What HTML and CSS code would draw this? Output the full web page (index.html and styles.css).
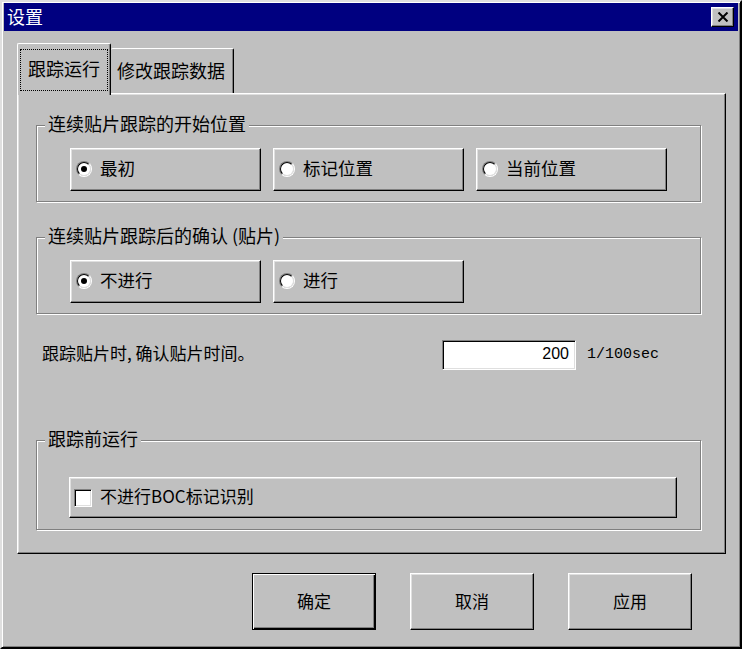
FILE: index.html
```html
<html>
  <head>
    <title>设置</title>
    <meta charset="UTF-8">
    <link rel="stylesheet" href="styles.css">
  </head>
  <body>
    <div class="window">
      <div class="titlebar">
        <span class="title">设置</span>
        <span class="close">
          <svg width="12" height="10" viewBox="0 0 12 10">
            <path d="M1.5 0.5 L10.5 9.5 M10.5 0.5 L1.5 9.5" stroke="#000" stroke-width="2" fill="none"/>
          </svg>
        </span>
      </div>
      <div class="content">
        <div class="tabs">
          <div class="tab tab-active"><span class="tab-label">跟踪运行</span></div>
          <div class="tab tab-other">修改跟踪数据</div>
        </div>
        <div class="panel">
          <div class="group">
            <span class="group-title">连续贴片跟踪的开始位置</span>
            <div class="choices">
              <div class="choice"><span class="radio on"><span class="radio-in"></span></span>最初</div>
              <div class="choice"><span class="radio"><span class="radio-in"></span></span>标记位置</div>
              <div class="choice"><span class="radio"><span class="radio-in"></span></span>当前位置</div>
            </div>
          </div>
          <div class="group g2">
            <span class="group-title">连续贴片跟踪后的确认 (贴片)</span>
            <div class="choices">
              <div class="choice"><span class="radio on"><span class="radio-in"></span></span>不进行</div>
              <div class="choice"><span class="radio"><span class="radio-in"></span></span>进行</div>
            </div>
          </div>
          <div class="time-row">
            <span class="time-text">跟踪贴片时, 确认贴片时间。</span>
            <div class="field">200</div>
            <span class="unit">1/100sec</span>
          </div>
          <div class="group g3">
            <span class="group-title">跟踪前运行</span>
            <div class="check-wrap">
              <div class="check-btn"><span class="check"></span>不进行BOC标记识别</div>
            </div>
          </div>
        </div>
        <div class="actions">
          <div class="btn btn-default">确定</div>
          <div class="btn">取消</div>
          <div class="btn">应用</div>
        </div>
      </div>
    </div>
  </body>
</html>
```
FILE: styles.css
```css
body {
  margin: 0;
  background: #c0c0c0;
  color: #000;
  font-family: "Noto Sans CJK SC", "Liberation Sans", sans-serif;
  font-size: 17px;
}
.window {
  width: 742px;
  height: 649px;
  box-sizing: border-box;
  border: 2px solid;
  border-color: #dfdfdf #000 #000 #dfdfdf;
  box-shadow: inset 1px 1px #fff, inset -1px -1px #808080;
  padding: 1px 2px 2px 2px;
  display: flex;
  flex-direction: column;
}
.titlebar {
  height: 28px;
  box-sizing: border-box;
  background: #000080;
  color: #fff;
  display: flex;
  align-items: center;
  justify-content: space-between;
  padding: 0 4px 0 3px;
  font-size: 18px;
}
.title {
  padding-bottom: 2px;
}
.close {
  width: 23px;
  height: 20px;
  box-sizing: border-box;
  background: #c0c0c0;
  border: 1px solid;
  border-color: #fff #000 #000 #fff;
  box-shadow: inset -1px -1px #808080, inset 1px 1px #dfdfdf;
  display: flex;
  align-items: center;
  justify-content: center;
}
.content {
  padding: 12px 12px 0 13px;
  display: flex;
  flex-direction: column;
}

/* tabs */
.tabs {
  display: flex;
  align-items: flex-end;
  height: 50px;
  font-size: 18px;
}
.tab {
  box-sizing: border-box;
  background: #c0c0c0;
  border-top: 1px solid #fff;
  border-right: 1px solid #000;
  border-radius: 2px 2px 0 0;
  box-shadow: inset -1px 0 #808080;
  display: flex;
  align-items: center;
  justify-content: center;
}
.tab-active {
  position: relative;
  z-index: 1;
  width: 94px;
  height: 52px;
  margin-bottom: -2px;
  border-left: 1px solid #fff;
  padding: 5px 2px 4px 2px;
}
.tab-label {
  flex: 1;
  align-self: stretch;
  box-sizing: border-box;
  border: 1px dotted #000;
  padding-bottom: 4px;
  display: flex;
  align-items: center;
  justify-content: center;
}
.tab-other {
  width: 123px;
  height: 45px;
  padding: 0 2px 2px 0;
}

/* panel */
.panel {
  height: 461px;
  box-sizing: border-box;
  border: 1px solid;
  border-color: #fff #000 #000 #fff;
  box-shadow: inset -1px -1px #808080, inset 1px 1px #dfdfdf;
  padding: 31px 24px 0 18px;
}
.group {
  position: relative;
  border: 1px solid #808080;
  box-shadow: inset 1px 1px #fff, 1px 1px #fff;
}
.group-title {
  position: absolute;
  top: -15px;
  left: 8px;
  padding: 0 3px;
  background: #c0c0c0;
  font-size: 18px;
  line-height: 24px;
}
.g2 {
  margin-top: 35px;
}
.g3 {
  margin-top: 70px;
}
.choices {
  display: flex;
  gap: 12px;
  padding: 22px 33px 10px 33px;
}
.choice, .check-btn, .btn {
  box-sizing: border-box;
  border: 1px solid;
  border-color: #fff #000 #000 #fff;
  box-shadow: inset -1px -1px #808080, inset 1px 1px #dfdfdf;
}
.choice {
  width: 191px;
  height: 43px;
  display: flex;
  align-items: center;
  gap: 8px;
  padding: 0 0 4px 5px;
  font-size: 17.5px;
}
.radio {
  width: 16px;
  height: 16px;
  box-sizing: border-box;
  border-radius: 50%;
  border: 1px solid;
  border-color: #808080 #fff #fff #808080;
  display: flex;
  margin-top: 3px;
}
.radio-in {
  flex: 1;
  border-radius: 50%;
  border: 1px solid;
  border-color: #000 #dfdfdf #dfdfdf #000;
  background: #fff;
  display: flex;
  align-items: center;
  justify-content: center;
}
.radio.on .radio-in::after {
  content: "";
  width: 6px;
  height: 6px;
  border-radius: 50%;
  background: #000;
}

/* time row */
.time-row {
  margin-top: 26px;
  height: 30px;
  display: flex;
  align-items: center;
  padding-left: 6px;
}
.time-text {
  width: 400px;
  padding-bottom: 5px;
}
.field {
  width: 134px;
  height: 30px;
  box-sizing: border-box;
  border: 1px solid;
  border-color: #808080 #fff #fff #808080;
  box-shadow: inset 1px 1px #000, inset -1px -1px #dfdfdf;
  background: #fff;
  font-family: "Liberation Sans", sans-serif;
  font-size: 16px;
  line-height: 26px;
  text-align: right;
  padding-right: 6px;
}
.unit {
  margin-left: 11px;
  padding-bottom: 2px;
  font-family: "Liberation Mono", monospace;
  font-size: 15px;
}

/* check */
.check-wrap {
  padding: 36px 23px 11px 32px;
}
.check-btn {
  height: 41px;
  display: flex;
  align-items: center;
  gap: 8px;
  padding: 0 0 4px 4px;
}
.check {
  width: 18px;
  height: 18px;
  box-sizing: border-box;
  border: 1px solid;
  border-color: #808080 #fff #fff #808080;
  box-shadow: inset 1px 1px #000, inset -1px -1px #dfdfdf;
  background: #fff;
  margin-top: 4px;
}

/* bottom buttons */
.actions {
  display: flex;
  justify-content: flex-end;
  gap: 34px;
  margin-top: 19px;
  padding-right: 34px;
}
.btn {
  width: 124px;
  height: 57px;
  display: flex;
  align-items: center;
  justify-content: center;
  padding-bottom: 3px;
}
.btn-default {
  border-color: #000;
  box-shadow: inset 1px 1px #fff, inset -1px -1px #000, inset -2px -2px #808080;
}
```
